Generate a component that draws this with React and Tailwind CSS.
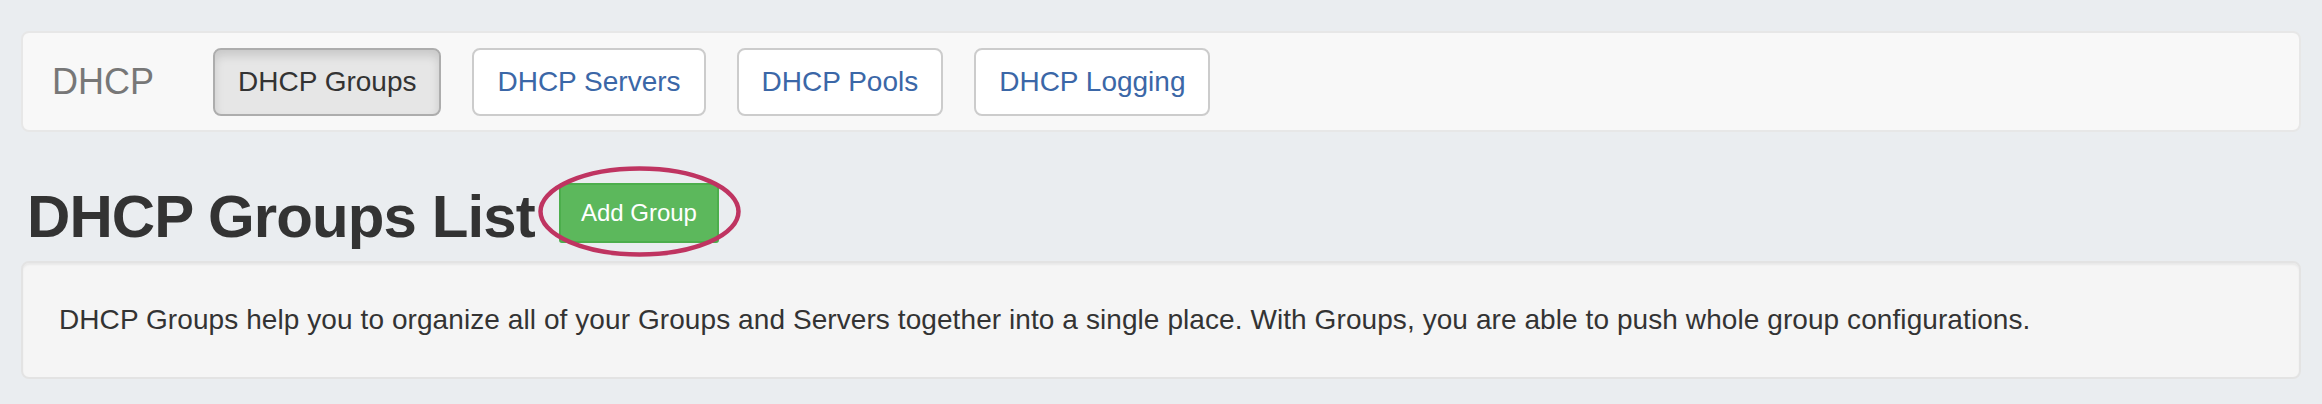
import React from 'react';

const tabs = [
  { label: 'DHCP Groups', active: true },
  { label: 'DHCP Servers' },
  { label: 'DHCP Pools' },
  { label: 'DHCP Logging' },
];

function NavTab({ label, active }) {
  return (
    <button
      className={
        active
          ? 'h-[68px] px-[23px] border-2 border-[#adadad] rounded-lg bg-[#e6e6e6] text-[#333] text-[28px] leading-[40px] shadow-[inset_0_6px_10px_rgba(0,0,0,0.125)]'
          : 'h-[68px] px-[23px] border-2 border-[#cccccc] rounded-lg bg-white text-[#3b67a7] text-[28px] leading-[40px]'
      }
    >
      {label}
    </button>
  );
}

export default function App() {
  return (
    <div className="min-h-[404px] bg-[#eaedf0] pt-[31px] px-[21px] font-['Liberation_Sans',Arial,sans-serif]">
      <nav className="h-[101px] flex items-center border-2 border-[#e7e7e7] bg-[#f8f8f8] rounded-lg pl-[29px]">
        <span className="text-[36px] text-[#777] mr-[59px]">DHCP</span>
        <div className="flex gap-[31px]">
          {tabs.map((t) => (
            <NavTab key={t.label} label={t.label} active={t.active} />
          ))}
        </div>
      </nav>

      <div className="flex items-start mt-[52px] mb-[11px]">
        <h2 className="ml-[6px] text-[60px] leading-[66px] font-bold tracking-[-0.9px] text-[#333]">
          DHCP Groups List
        </h2>
        <div className="relative ml-[24px] mt-[-1px]">
          <button className="h-[60px] px-[20px] border-2 border-[#4cae4c] rounded-[3px] bg-[#5cb85c] text-white text-[24px] leading-[36px]">
            Add Group
          </button>
          <svg
            className="absolute -left-[21px] -top-[17px] w-[203px] h-[91px] pointer-events-none"
            viewBox="0 0 203 91"
            fill="none"
          >
            <ellipse cx="101.5" cy="45.5" rx="99" ry="43" stroke="#bf3461" strokeWidth="4.5" />
          </svg>
        </div>
      </div>

      <div className="h-[118px] flex items-center border-2 border-[#e3e3e3] bg-[#f5f5f5] rounded-lg pl-[36px] shadow-[inset_0_2px_2px_rgba(0,0,0,0.05)]">
        <p className="text-[28px] tracking-[0.08px] text-[#333]">
          DHCP Groups help you to organize all of your Groups and Servers together into a single place. With Groups, you are able to push whole group configurations.
        </p>
      </div>
    </div>
  );
}
